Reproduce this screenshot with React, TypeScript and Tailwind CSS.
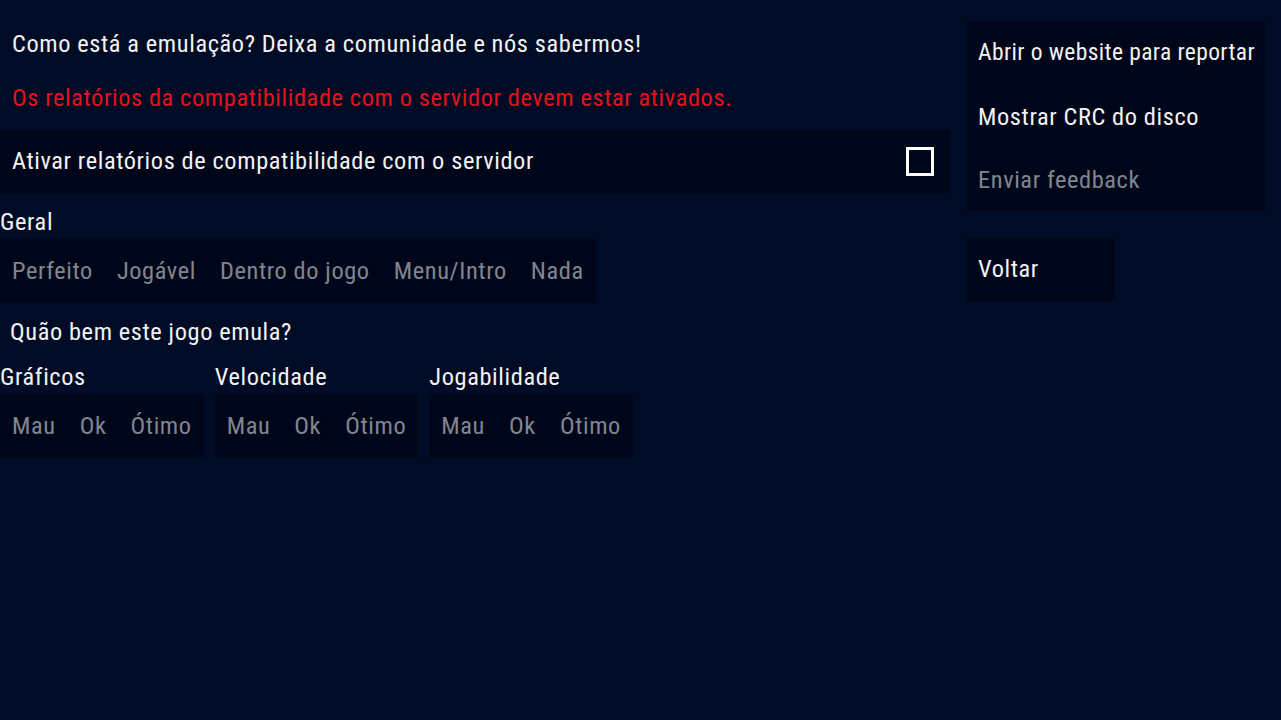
const font = { fontFamily: '"Roboto Condensed", Roboto, sans-serif' };

function Segment({ items }: { items: string[] }) {
  return (
    <div className="flex h-[64px] items-center bg-[#00061a]">
      {items.map((it) => (
        <span key={it} className="whitespace-nowrap px-3 text-[#80868f]">
          {it}
        </span>
      ))}
    </div>
  );
}

function Rating({ label }: { label: string }) {
  return (
    <div className="flex flex-col">
      <div className="flex h-[32px] items-center text-[#f2f2f2]">{label}</div>
      <div className="mt-[1px]">
        <Segment items={['Mau', 'Ok', 'Ótimo']} />
      </div>
    </div>
  );
}

export default function App() {
  return (
    <div
      style={font}
      className="flex h-[720px] w-[1281px] overflow-hidden whitespace-nowrap bg-[#000c25] text-[24.4px] tracking-[0.6px] text-[#f2f2f2]"
    >
      <div className="flex w-[950px] shrink-0 flex-col">
        <div className="mt-[28px] flex h-[32px] items-center px-3">
          Como está a emulação? Deixa a comunidade e nós sabermos!
        </div>
        <div className="mt-[22px] flex h-[32px] items-center px-3 text-[#e3121c]">
          Os relatórios da compatibilidade com o servidor devem estar ativados.
        </div>
        <div className="mt-[16px] flex h-[63px] items-center justify-between bg-[#00061a] pl-3 pr-[16px]">
          <span>Ativar relatórios de compatibilidade com o servidor</span>
          <span className="h-[29px] w-[28px] border-[3px] border-white" />
        </div>
        <div className="mt-[13px] flex h-[32px] items-center">Geral</div>
        <div className="mt-[1px] flex">
          <Segment items={['Perfeito', 'Jogável', 'Dentro do jogo', 'Menu/Intro', 'Nada']} />
        </div>
        <div className="mt-[13px] flex h-[32px] items-center px-[10px]">Quão bem este jogo emula?</div>
        <div className="mt-[13px] flex gap-[11px]">
          <Rating label="Gráficos" />
          <Rating label="Velocidade" />
          <Rating label="Jogabilidade" />
        </div>
      </div>

      <div className="ml-[16px] flex flex-col items-start pt-[21px]">
        <div className="flex w-[299px] flex-col bg-[#00061a]">
          <div className="flex h-[64px] items-center px-3 text-[23.5px] tracking-[0.4px]">
            Abrir o website para reportar
          </div>
          <div className="flex h-[64px] items-center px-3">Mostrar CRC do disco</div>
          <div className="flex h-[62px] items-center px-3 text-[#80868f]">Enviar feedback</div>
        </div>
        <div className="mt-[27px] flex h-[63px] w-[149px] items-center bg-[#00061a] px-3">Voltar</div>
      </div>
    </div>
  );
}
